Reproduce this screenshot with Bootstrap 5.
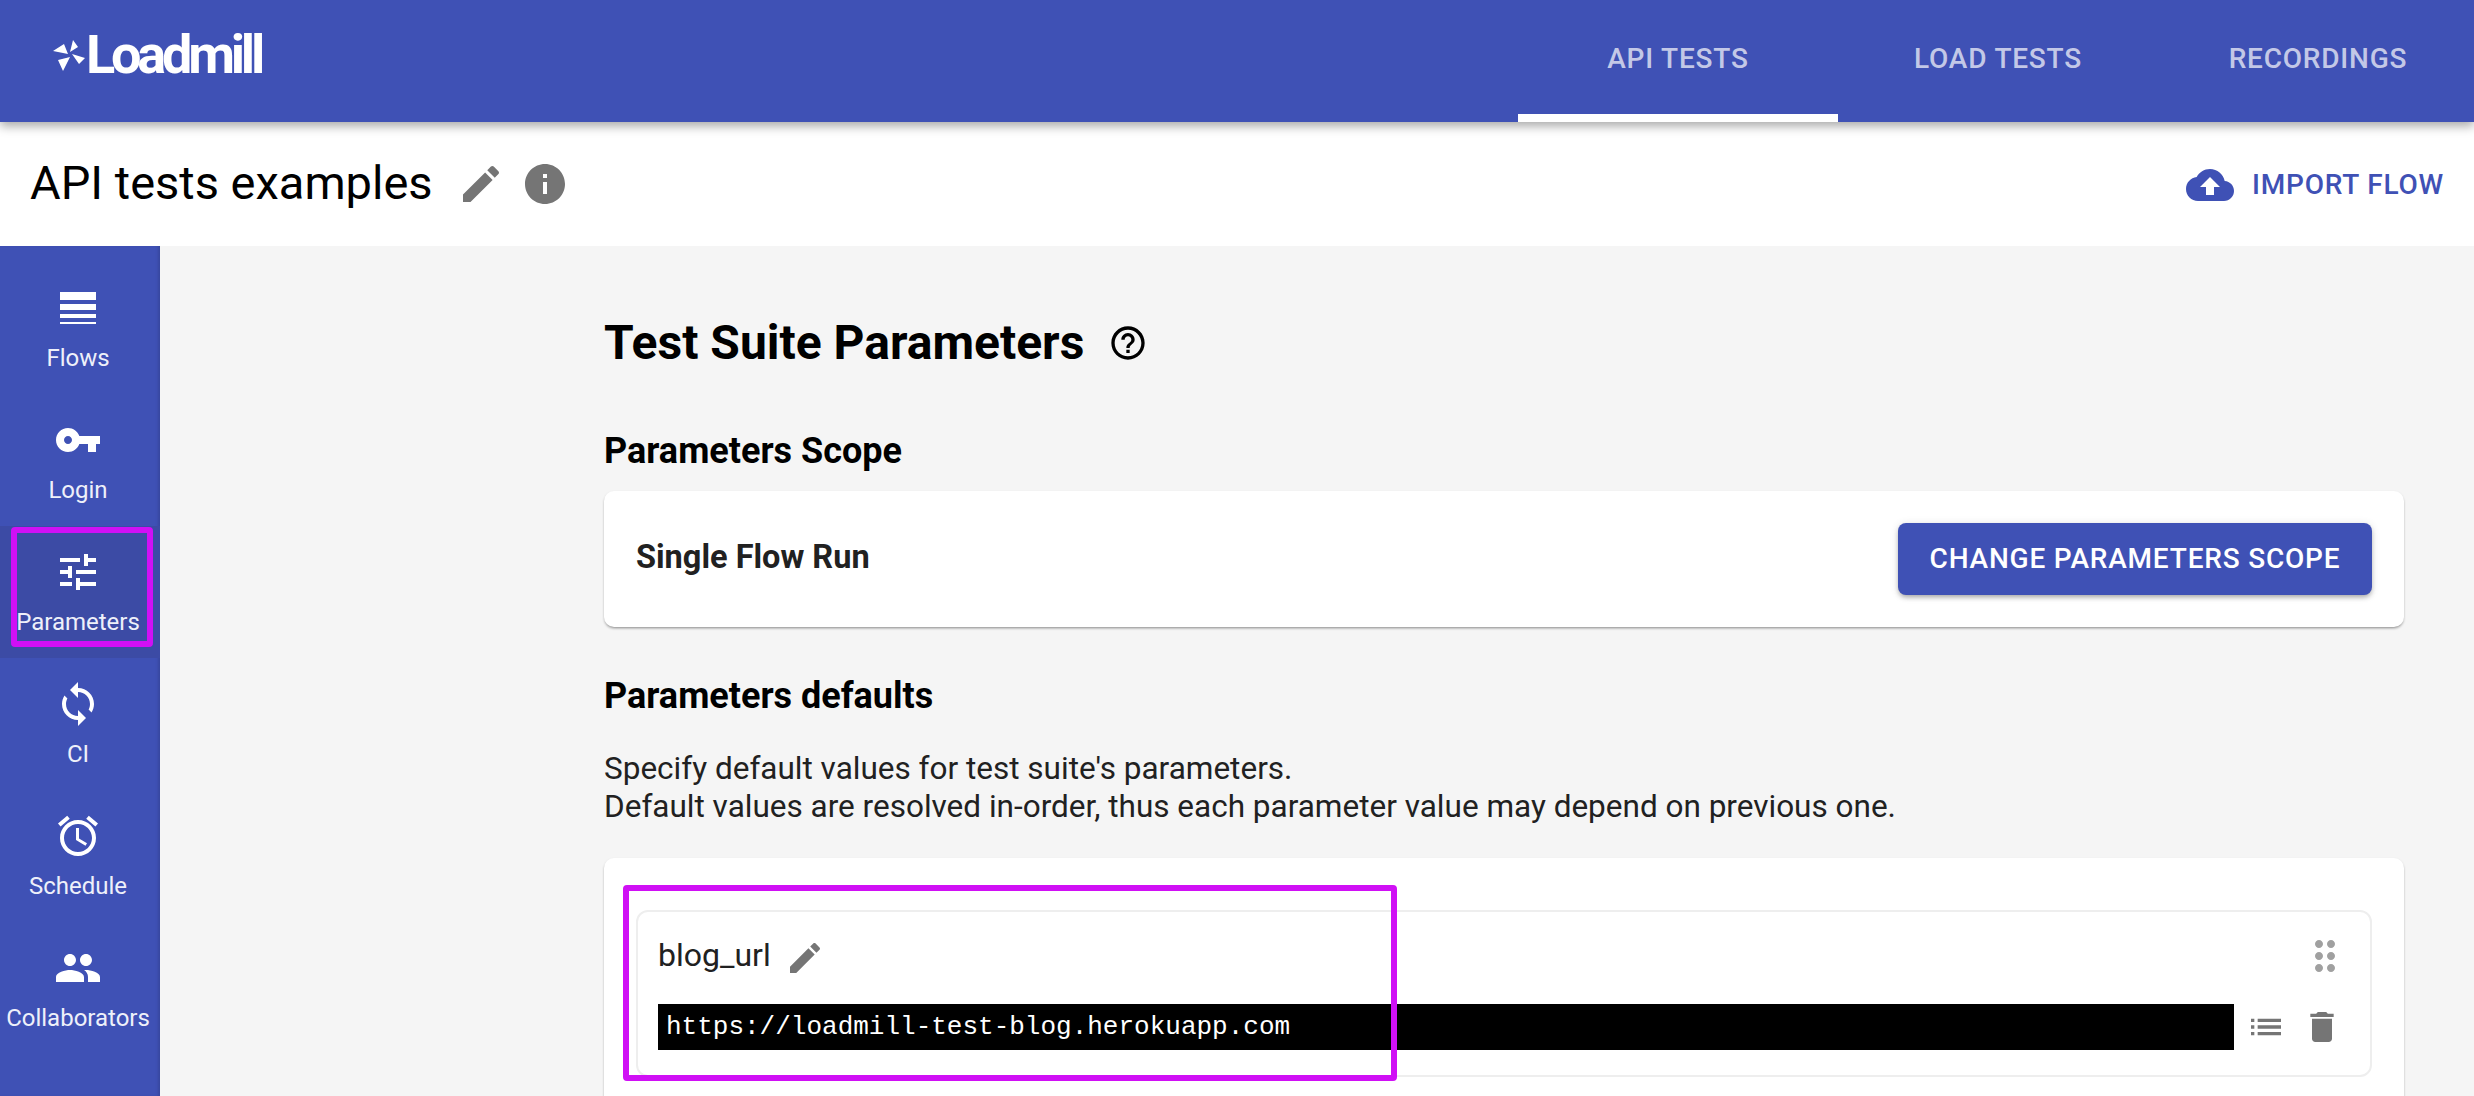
<!DOCTYPE html>
<html lang="en">
<head>
<meta charset="utf-8">
<title>Test Suite Parameters</title>
<link href="https://cdn.jsdelivr.net/npm/bootstrap@5.3.0/dist/css/bootstrap.min.css" rel="stylesheet">
<style>
html,body{height:100%;}
body{font-family:Roboto,"Liberation Sans",sans-serif;background:#f5f5f5;color:#000;overflow:hidden;position:relative;width:2474px;height:1096px;}
svg{display:block;flex:none;fill:currentColor;}
.app-bar{height:122px;background:#3f51b5;box-shadow:0 4px 10px rgba(0,0,0,.35);position:relative;z-index:3;padding:0;overflow:hidden;align-items:stretch;flex-wrap:nowrap;}
.brand-mark{display:flex;align-items:center;gap:1px;margin:0 0 0 53px;padding:0 0 12px;color:#fff;font-size:54px;font-weight:700;letter-spacing:-4.2px;line-height:1;text-decoration:none;}
.tab-row{margin-right:-4px;flex-wrap:nowrap;}
.tab-item{width:320px;height:122px;padding:4px 0 0;display:flex;align-items:center;justify-content:center;font-size:28px;font-weight:500;letter-spacing:.8px;color:rgba(255,255,255,.7);border-bottom:8px solid transparent;}
.tab-item.on{border-bottom-color:#fff;}
.sub-bar{height:124px;background:#fff;padding:0 30px 0 30px;}
.page-title{font-size:47px;font-weight:400;margin:0;line-height:1;padding-bottom:3px;}
.grey-ico{color:#757575;}
.import-link{color:#3f51b5;font-size:28px;font-weight:500;letter-spacing:.8px;padding:1px 0 0;border:0;gap:18px;display:flex;align-items:center;}
.body-row{height:850px;overflow:hidden;}
.side-rail{width:160px;background:#3f51b5;padding:16px 0 0;box-shadow:inset -3px 0 3px -1px rgba(0,0,0,.12);flex:none;}
.rail-item{height:132px;padding:22px 4px 0 0;color:#eef0fa;font-size:24px;line-height:52px;text-align:center;}
.rail-item svg{margin:0 auto;color:#fff;}
.rail-item.on{background:#3c4ba5;}
.content-pane{padding:69px 70px 0 444px;flex:1;min-width:0;}
.main-head{font-size:48px;font-weight:700;line-height:56px;margin:0;gap:24px;}
.sec-head{font-size:36px;font-weight:700;line-height:44px;margin:0;}
.head-a{margin-top:58px;}
.head-b{margin-top:47px;}
.sheet{background:#fff;border:0;border-radius:10px;box-shadow:0 2px 3px -1px rgba(0,0,0,.4),0 1px 3px rgba(0,0,0,.08);}
.scope-sheet{height:136px;padding:0 32px;margin-top:18px;}
.scope-name{font-size:32.5px;font-weight:700;color:#212121;padding-bottom:3px;}
.scope-btn{width:474px;height:72px;padding:0;background:#3f51b5;border:0;border-radius:8px;color:#fff;font-size:28px;font-weight:500;letter-spacing:.8px;box-shadow:0 3px 5px -1px rgba(0,0,0,.3),0 1px 8px rgba(0,0,0,.12);}
.note-text{font-size:31.5px;line-height:38px;margin:32px 0 0;color:#212121;}
.param-sheet{padding:52px 32px 0;height:260px;margin-top:32px;}
.param-box{height:167px;border:2px solid #eee;border-radius:12px;padding:0 21px 0 20px;}
.param-top{height:92px;}
.param-name{font-size:32px;color:#212121;padding-bottom:6px;}
.name-wrap{gap:14px;}
.drag-ico{margin-bottom:4px;}
.code-row{padding-right:7px;}
.code-field{height:46px;flex:1;background:#000;color:#fff;font-family:"Liberation Mono",monospace;font-size:26px;line-height:46px;padding:0 8px;margin:0;}
.ico-list{margin-left:12px;}
.flag-box{position:absolute;border:6px solid #d010f5;border-radius:4px;pointer-events:none;z-index:5;}
.flag-a{left:11px;top:527px;width:142px;height:120px;}
.flag-b{left:623px;top:885px;width:774px;height:196px;}
</style>
</head>
<body>
<nav class="navbar app-bar d-flex justify-content-between">
  <a class="brand-mark" href="#">
    <svg width="32" height="31" viewBox="0 0 32 31"><path d="M20 0 17 12 25 7zM0 11 11 4 15 14zM32 18 19 14 26 24zM10 31 5 20 17 17z"/></svg>
    <span>Loadmill</span>
  </a>
  <div class="nav tab-row">
    <a class="nav-link tab-item on" href="#">API TESTS</a>
    <a class="nav-link tab-item" href="#">LOAD TESTS</a>
    <a class="nav-link tab-item" href="#">RECORDINGS</a>
  </div>
</nav>
<div class="sub-bar d-flex align-items-center justify-content-between">
  <div class="d-flex align-items-center">
    <h1 class="page-title">API tests examples</h1>
    <svg class="grey-ico ms-4" width="48" height="48" viewBox="0 0 24 24"><path d="M3 17.25V21h3.75L17.81 9.94l-3.75-3.75L3 17.25zM20.71 7.04c.39-.39.39-1.02 0-1.41l-2.34-2.34c-.39-.39-1.02-.39-1.41 0l-1.83 1.83 3.75 3.75 1.83-1.83z"/></svg>
    <svg class="grey-ico ms-3" width="48" height="48" viewBox="0 0 24 24"><path d="M12 2C6.48 2 2 6.48 2 12s4.48 10 10 10 10-4.48 10-10S17.52 2 12 2zm1 15h-2v-6h2v6zm0-8h-2V7h2v2z"/></svg>
  </div>
  <button class="btn import-link" type="button">
    <svg width="48" height="48" viewBox="0 0 24 24"><path d="M19.35 10.04C18.67 6.59 15.64 4 12 4 9.11 4 6.6 5.64 5.35 8.04 2.34 8.36 0 10.91 0 14c0 3.31 2.69 6 6 6h13c2.76 0 5-2.24 5-5 0-2.64-2.05-4.78-4.65-4.96zM14 13v4h-4v-4H7l5-5 5 5h-3z"/></svg>
    IMPORT FLOW
  </button>
</div>
<div class="d-flex body-row">
  <aside class="side-rail">
    <div class="rail-item"><svg width="48" height="48" viewBox="0 0 24 24"><path d="M3 4h18v4H3zM3 10h18v3H3zM3 15h18v2H3zM3 19h18v1H3z"/></svg>Flows</div>
    <div class="rail-item"><svg width="48" height="48" viewBox="0 0 24 24"><path d="M12.65 10C11.83 7.67 9.61 6 7 6c-3.31 0-6 2.69-6 6s2.69 6 6 6c2.61 0 4.83-1.67 5.65-4H17v4h4v-4h2v-4H12.65zM7 14c-1.1 0-2-.9-2-2s.9-2 2-2 2 .9 2 2-.9 2-2 2z"/></svg>Login</div>
    <div class="rail-item on"><svg width="48" height="48" viewBox="0 0 24 24"><path d="M3 17v2h6v-2H3zM3 5v2h10V5H3zm10 16v-2h8v-2h-8v-2h-2v6h2zM7 9v2H3v2h4v2h2V9H7zm14 4v-2H11v2h10zm-6-4h2V7h4V5h-4V3h-2v6z"/></svg>Parameters</div>
    <div class="rail-item"><svg width="48" height="48" viewBox="0 0 24 24"><path d="M12 4V1L8 5l4 4V6c3.31 0 6 2.69 6 6 0 1.01-.25 1.97-.7 2.8l1.46 1.46C19.54 15.03 20 13.57 20 12c0-4.42-3.58-8-8-8zm0 14c-3.31 0-6-2.69-6-6 0-1.01.25-1.97.7-2.8L5.24 7.74C4.46 8.97 4 10.43 4 12c0 4.42 3.58 8 8 8v3l4-4-4-4v3z"/></svg>CI</div>
    <div class="rail-item"><svg width="48" height="48" viewBox="0 0 24 24"><path d="M22 5.72l-4.6-3.86-1.29 1.53 4.6 3.86L22 5.72zM7.88 3.39L6.6 1.86 2 5.71l1.29 1.53 4.59-3.85zM12.5 8H11v6l4.75 2.85.75-1.23-4-2.37V8zM12 4c-4.97 0-9 4.03-9 9s4.03 9 9 9 9-4.03 9-9-4.03-9-9-9zm0 16c-3.87 0-7-3.13-7-7s3.13-7 7-7 7 3.13 7 7-3.13 7-7 7z"/></svg>Schedule</div>
    <div class="rail-item"><svg width="48" height="48" viewBox="0 0 24 24"><path d="M16 11c1.66 0 2.99-1.34 2.99-3S17.66 5 16 5c-1.66 0-3 1.34-3 3s1.34 3 3 3zm-8 0c1.66 0 2.99-1.34 2.99-3S9.66 5 8 5C6.34 5 5 6.34 5 8s1.34 3 3 3zm0 2c-2.33 0-7 1.17-7 3.5V19h14v-2.5c0-2.33-4.67-3.5-7-3.5zm8 0c-.29 0-.62.02-.97.05 1.16.84 1.97 1.97 1.97 3.45V19h6v-2.5c0-2.33-4.67-3.5-7-3.5z"/></svg>Collaborators</div>
  </aside>
  <main class="content-pane">
    <h2 class="main-head d-flex align-items-center">Test Suite Parameters
      <svg width="40" height="40" viewBox="0 0 24 24"><path d="M11 18h2v-2h-2v2zm1-16C6.48 2 2 6.48 2 12s4.48 10 10 10 10-4.48 10-10S17.52 2 12 2zm0 18c-4.41 0-8-3.59-8-8s3.59-8 8-8 8 3.59 8 8-3.59 8-8 8zm0-14c-2.21 0-4 1.79-4 4h2c0-1.1.9-2 2-2s2 .9 2 2c0 2-3 1.75-3 5h2c0-2.25 3-2.5 3-5 0-2.21-1.79-4-4-4z"/></svg>
    </h2>
    <h3 class="sec-head head-a">Parameters Scope</h3>
    <div class="card sheet scope-sheet d-flex flex-row align-items-center justify-content-between">
      <span class="scope-name">Single Flow Run</span>
      <button class="btn scope-btn" type="button">CHANGE PARAMETERS SCOPE</button>
    </div>
    <h3 class="sec-head head-b">Parameters defaults</h3>
    <p class="note-text">Specify default values for test suite's parameters.<br>Default values are resolved in-order, thus each parameter value may depend on previous one.</p>
    <div class="card sheet param-sheet">
      <div class="param-box">
        <div class="param-top d-flex align-items-center justify-content-between">
          <div class="d-flex align-items-center name-wrap">
            <span class="param-name">blog_url</span>
            <svg class="grey-ico" width="40" height="40" viewBox="0 0 24 24"><path d="M3 17.25V21h3.75L17.81 9.94l-3.75-3.75L3 17.25zM20.71 7.04c.39-.39.39-1.02 0-1.41l-2.34-2.34c-.39-.39-1.02-.39-1.41 0l-1.83 1.83 3.75 3.75 1.83-1.83z"/></svg>
          </div>
          <svg class="drag-ico" width="48" height="48" viewBox="0 0 24 24"><path fill="#a0a0a0" d="M11 18c0 1.1-.9 2-2 2s-2-.9-2-2 .9-2 2-2 2 .9 2 2zm-2-8c-1.1 0-2 .9-2 2s.9 2 2 2 2-.9 2-2-.9-2-2-2zm0-6c-1.1 0-2 .9-2 2s.9 2 2 2 2-.9 2-2-.9-2-2-2zm6 4c1.1 0 2-.9 2-2s-.9-2-2-2-2 .9-2 2 .9 2 2 2zm0 2c-1.1 0-2 .9-2 2s.9 2 2 2 2-.9 2-2-.9-2-2-2zm0 6c-1.1 0-2 .9-2 2s.9 2 2 2 2-.9 2-2-.9-2-2-2z"/></svg>
        </div>
        <div class="d-flex align-items-center code-row">
          <div class="code-field">https://loadmill-test-blog.herokuapp.com</div>
          <svg class="grey-ico ico-list" width="40" height="40" viewBox="0 0 24 24"><path d="M3 13h2v-2H3v2zm0 4h2v-2H3v2zm0-8h2V7H3v2zm4 4h14v-2H7v2zm0 4h14v-2H7v2zM7 7v2h14V7H7z"/></svg>
          <svg class="grey-ico ms-3" width="40" height="40" viewBox="0 0 24 24"><path d="M6 19c0 1.1.9 2 2 2h8c1.1 0 2-.9 2-2V7H6v12zM19 4h-3.5l-1-1h-5l-1 1H5v2h14V4z"/></svg>
        </div>
      </div>
    </div>
  </main>
</div>
<div class="flag-box flag-a"></div>
<div class="flag-box flag-b"></div>
<script src="https://cdn.jsdelivr.net/npm/bootstrap@5.3.0/dist/js/bootstrap.bundle.min.js"></script>
</body>
</html>
